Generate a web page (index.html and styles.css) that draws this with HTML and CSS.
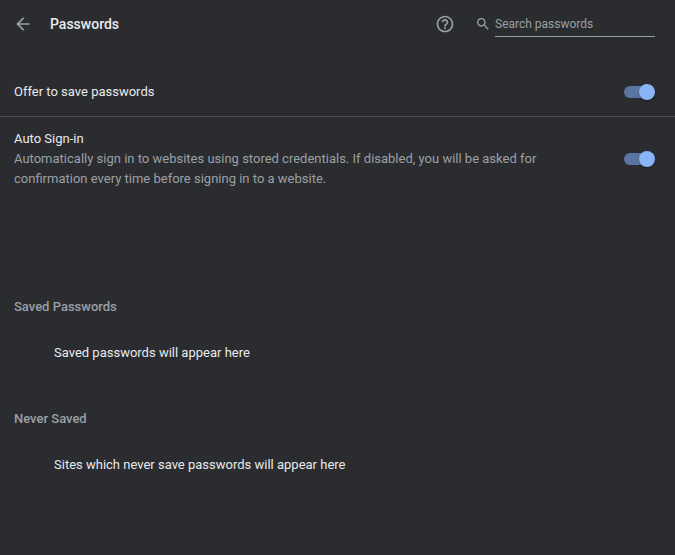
FILE: index.html
```html
<!DOCTYPE html>
<html lang="en">
<head>
<meta charset="utf-8">
<title>Passwords</title>
<link rel="stylesheet" href="styles.css">
</head>
<body>
<main>
  <header class="topbar">
    <button class="icon-button" type="button" aria-label="Back">
      <svg width="20" height="20" viewBox="0 0 24 24"><path d="M20 11H7.83l5.59-5.59L12 4l-8 8 8 8 1.41-1.41L7.83 13H20v-2z"/></svg>
    </button>
    <h1>Passwords</h1>
    <button class="icon-button help" type="button" aria-label="Help">
      <svg width="20" height="20" viewBox="0 0 24 24"><path d="M11 18h2v-2h-2v2zm1-16C6.48 2 2 6.48 2 12s4.480 10 10 10 10-4.480 10-10S17.520 2 12 2zm0 18c-4.410 0-8-3.590-8-8s3.590-8 8-8 8 3.590 8 8-3.590 8-8 8zm0-14c-2.210 0-4 1.790-4 4h2c0-1.100.9-2 2-2s2 .9 2 2c0 2-3 1.750-3 5h2c0-2.250 3-2.500 3-5 0-2.210-1.790-4-4-4z"/></svg>
    </button>
    <label class="search-icon" for="search" aria-label="Search passwords">
      <svg width="16" height="16" viewBox="0 0 24 24"><path d="M15.500 14h-.79l-.28-.27C15.410 12.590 16 11.110 16 9.500 16 5.910 13.090 3 9.500 3S3 5.910 3 9.500 5.910 16 9.500 16c1.610 0 3.090-.59 4.230-1.570l.27.280v.79l5 4.990L20.490 19l-4.990-5zm-6 0C7.010 14 5 11.990 5 9.500S7.010 5 9.500 5 14 7.010 14 9.500 11.990 14 9.500 14z"/></svg>
    </label>
    <input class="search" id="search" type="text" placeholder="Search passwords">
  </header>

  <div class="setting">
    <label class="setting-text" for="offer">Offer to save passwords</label>
    <input class="toggle" id="offer" type="checkbox" role="switch" checked>
  </div>
  <div class="setting divided">
    <div class="setting-text">
      <label for="auto">Auto Sign-in</label>
      <p>Automatically sign in to websites using stored credentials. If disabled, you will be asked for confirmation every time before signing in to a website.</p>
    </div>
    <input class="toggle" id="auto" type="checkbox" role="switch" checked>
  </div>

  <section class="saved">
    <h2>Saved Passwords</h2>
    <p>Saved passwords will appear here</p>
  </section>
  <section>
    <h2>Never Saved</h2>
    <p>Sites which never save passwords will appear here</p>
  </section>
</main>
</body>
</html>
```
FILE: styles.css
```css
* {
  box-sizing: border-box;
}

body {
  margin: 0;
  background: #2b2c2f;
  color: #e8eaed;
  font: 13px/20px Roboto, sans-serif;
}

h1, h2, p {
  margin: 0;
}

.topbar {
  display: flex;
  align-items: center;
  height: 48px;
  padding: 0 20px 0 13px;
}

.icon-button {
  display: flex;
  padding: 0;
  border: 0;
  background: none;
}

svg {
  display: block;
  fill: #9aa0a6;
}

h1 {
  margin-left: 17px;
  font-size: 14px;
  font-weight: 500;
}

.help {
  margin-left: auto;
}

.search-icon {
  margin: 0 4px 0 20px;
}

.search {
  width: 160px;
  height: 26px;
  padding: 0;
  border: 0;
  border-bottom: 1px solid #9aa0a6;
  border-radius: 0;
  outline: 0;
  background: none;
  color: inherit;
  font: 12px/20px Roboto, sans-serif;
}

.search::placeholder {
  color: #9aa0a6;
  opacity: 1;
}

.setting {
  display: flex;
  align-items: center;
  justify-content: space-between;
  padding: 0 20px 0 14px;
  min-height: 48px;
}

.topbar + .setting {
  margin-top: 20px;
}

.divided {
  min-height: 84px;
  border-top: 1px solid #48494c;
}

.setting-text {
  max-width: 540px;
}

.setting-text p {
  color: #9aa0a6;
}

.toggle {
  appearance: none;
  display: grid;
  align-items: center;
  flex: none;
  width: 31px;
  height: 16px;
  margin: 0;
}

.toggle::before,
.toggle::after {
  content: "";
  grid-area: 1 / 1;
}

.toggle::before {
  width: 28px;
  height: 12px;
  border-radius: 6px;
  background: #5b75a2;
}

.toggle::after {
  justify-self: end;
  width: 16px;
  height: 16px;
  border-radius: 50%;
  background: #8ab4f8;
  box-shadow: 0 1px 2px rgb(0 0 0 / 35%);
}

section {
  padding: 0 14px;
  margin-bottom: 46px;
}

.saved {
  margin-top: 97px;
}

h2 {
  color: #9aa0a6;
  font-size: 13px;
  font-weight: 500;
}

section p {
  padding: 26px 0 0 40px;
}
```
